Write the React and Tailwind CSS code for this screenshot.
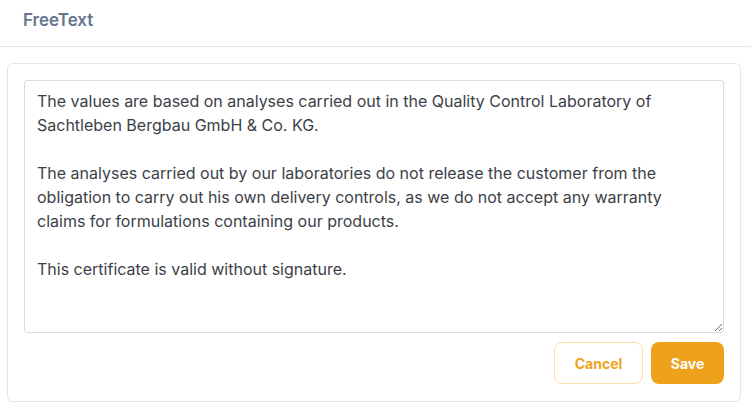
import React from 'react'

const initialText = `The values are based on analyses carried out in the Quality Control Laboratory of Sachtleben Bergbau GmbH & Co. KG.

The analyses carried out by our laboratories do not release the customer from the obligation to carry out his own delivery controls, as we do not accept any warranty claims for formulations containing our products.

This certificate is valid without signature.`

function App() {
  const [text, setText] = React.useState(initialText)
  return (
    <div className="min-h-screen bg-white font-['Inter',sans-serif]">
      <div className="h-[47px] border-b border-[#e3e6ea] px-[23px] pt-[8px]">
        <h1 className="text-[17px] font-semibold text-[#67758e]">FreeText</h1>
      </div>
      <div className="pl-[7px] pr-[10px] pt-4">
        <div className="rounded-md border border-[#e3e6ea] px-4 pt-4 pb-[17px]">
          <textarea
            value={text}
            onChange={(e) => setText(e.target.value)}
            className="block h-[253px] w-full resize-y rounded-[3px] border border-[#d9dde3] px-3 py-2 text-[16px] leading-6 text-[#3c4148] outline-none"
          />
          <div className="mt-[9px] flex justify-end gap-2">
            <button className="h-[42px] w-[89px] rounded-lg border border-[#fcdca8] bg-white text-[14px] font-bold text-[#efa21c]">
              Cancel
            </button>
            <button className="h-[42px] w-[73px] rounded-lg bg-[#eea11a] text-[14px] font-bold text-white">
              Save
            </button>
          </div>
        </div>
      </div>
    </div>
  )
}

export default App
